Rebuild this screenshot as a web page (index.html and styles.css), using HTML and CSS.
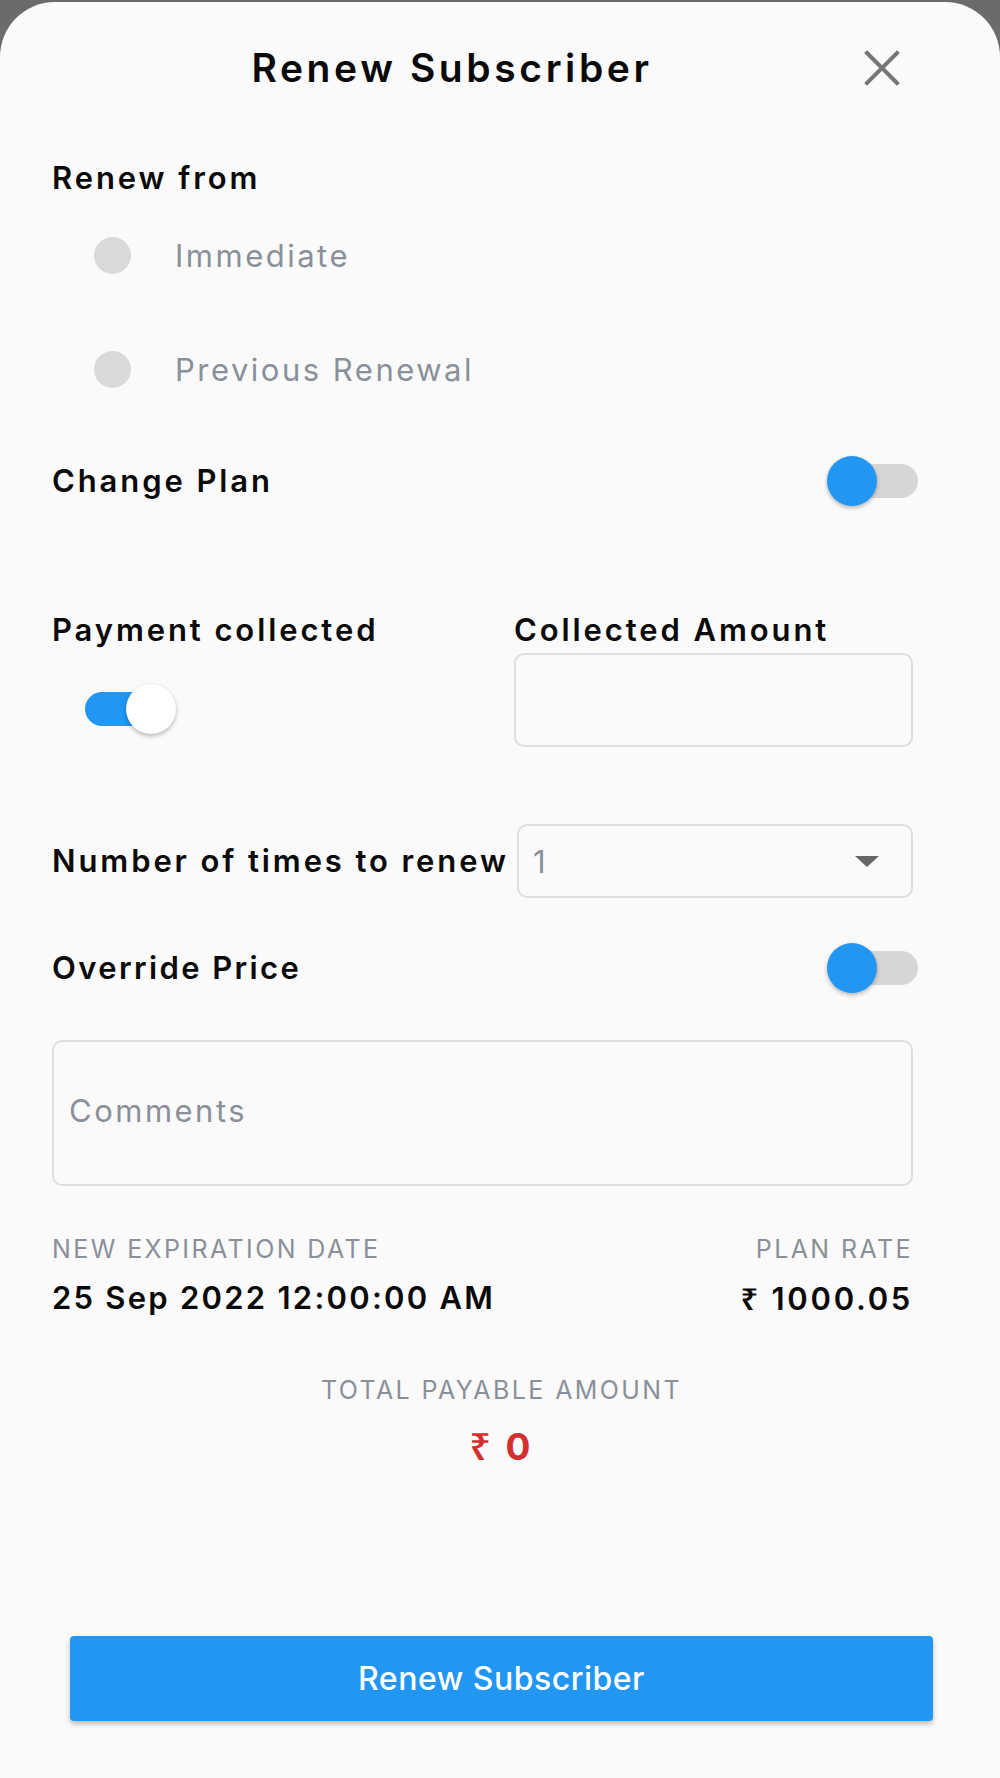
FILE: index.html
```html
<!DOCTYPE html>
<html lang="en">
<head>
  <meta charset="UTF-8" />
  <meta name="viewport" content="width=device-width, initial-scale=1" />
  <title>Renew Subscriber</title>
  <link rel="stylesheet" href="styles.css">
</head>
<body>

<div class="sheet">

  <!-- Header -->
  <div class="sheet-header">
    <h1 class="sheet-title">Renew Subscriber</h1>
    <button class="close-btn" title="Close">
      <svg viewBox="0 0 36 36" width="36" height="36">
        <path d="M3 3 L33 33 M33 3 L3 33" stroke="#767676" stroke-width="4" stroke-linecap="square" fill="none"/>
      </svg>
    </button>
  </div>

  <div class="sheet-body">

    <div class="label renew-from">Renew from</div>

    <div class="radio-row">
      <span class="radio"></span>
      <span class="radio-text">Immediate</span>
    </div>
    <div class="radio-row">
      <span class="radio"></span>
      <span class="radio-text">Previous Renewal</span>
    </div>

    <div class="switch-row change-plan">
      <span class="label">Change Plan</span>
      <span class="switch"><span class="track"></span><span class="knob"></span></span>
    </div>

    <div class="payment-row">
      <div class="payment-col">
        <div class="label">Payment collected</div>
        <span class="switch on"><span class="track"></span><span class="knob"></span></span>
      </div>
      <div class="amount-col">
        <div class="label">Collected Amount</div>
        <div class="field amount-field"></div>
      </div>
    </div>

    <div class="times-row">
      <span class="label">Number of times to renew</span>
      <div class="field select-field">
        <span class="select-value">1</span>
        <span class="caret"></span>
      </div>
    </div>

    <div class="switch-row override">
      <span class="label tight">Override Price</span>
      <span class="switch"><span class="track"></span><span class="knob"></span></span>
    </div>

    <div class="field comments-field">
      <span class="placeholder">Comments</span>
    </div>

    <div class="info-row">
      <div class="info-col">
        <div class="caption">NEW EXPIRATION DATE</div>
        <div class="value">25 Sep 2022 12:00:00 AM</div>
      </div>
      <div class="info-col right">
        <div class="caption">PLAN RATE</div>
        <div class="value price"><span class="rupee">₹</span> 1000.05</div>
      </div>
    </div>

    <div class="total">
      <div class="caption">TOTAL PAYABLE AMOUNT</div>
      <div class="total-value"><span class="rupee">₹</span> 0</div>
    </div>

    <button class="renew-btn">Renew Subscriber</button>

  </div>
</div>

</body>
</html>
```

FILE: styles.css
```css
body {
  margin: 0;
  background: #6b6b6b;
  font-family: "Inter", "Noto Sans", "DejaVu Sans", sans-serif;
  color: #0a0a0a;
}

.sheet {
  margin-top: 2px;
  min-height: 1776px;
  background: #fafafa;
  border-radius: 55px 55px 0 0;
  box-sizing: border-box;
}

/* header with title and close icon */
.sheet-header {
  display: flex;
  align-items: center;
  height: 132px;
  padding-right: 100px;
}

.sheet-title {
  flex: 1;
  margin: 0;
  padding-left: 40px;
  text-align: center;
  font-size: 39px;
  font-weight: 600;
  line-height: 50px;
  letter-spacing: 3.6px;
}

.close-btn {
  width: 36px;
  height: 36px;
  padding: 0;
  border: none;
  background: none;
  display: flex;
}

.sheet-body {
  padding: 0 87px 0 52px;
}

.label {
  font-size: 31px;
  font-weight: 600;
  line-height: 40px;
  letter-spacing: 2.9px;
  white-space: nowrap;
}

.label.tight {
  letter-spacing: 2.4px;
}

.renew-from {
  margin-top: 24px;
}

/* radio options */
.radio-row {
  height: 114px;
  display: flex;
  align-items: center;
  padding-left: 42px;
}

.radio {
  width: 37px;
  height: 37px;
  border-radius: 50%;
  background: #d9d9d9;
  margin-right: 44px;
}

.radio-text,
.select-value,
.placeholder {
  font-size: 31px;
  color: #8a9099;
  letter-spacing: 2.5px;
}

/* switches */
.switch-row {
  display: flex;
  align-items: center;
  justify-content: space-between;
}

.change-plan {
  height: 110px;
}

.override {
  margin-top: 40px;
  height: 60px;
}

.switch {
  position: relative;
  width: 85px;
  height: 34px;
  margin-right: -5px;
  display: block;
}

.switch .track {
  display: block;
  height: 34px;
  border-radius: 17px;
  background: #d6d6d6;
}

.switch .knob {
  position: absolute;
  top: -8px;
  left: -6px;
  width: 50px;
  height: 50px;
  border-radius: 50%;
  background: #2196f3;
  box-shadow: 0 2px 4px rgba(0, 0, 0, 0.28);
}

.switch.on {
  margin: 42px 0 0 33px;
}

.switch.on .track {
  background: #2196f3;
}

.switch.on .knob {
  left: auto;
  right: -6px;
  background: #fff;
}

/* payment + amount */
.payment-row {
  display: grid;
  grid-template-columns: 462px 399px;
  margin-top: 74px;
}

.field {
  border: 2px solid #dedede;
  border-radius: 10px;
  box-sizing: border-box;
}

.amount-field {
  margin-top: 3px;
  height: 94px;
}

.times-row {
  display: grid;
  grid-template-columns: 1fr 396px;
  align-items: center;
  margin-top: 77px;
}

.select-field {
  height: 74px;
  display: flex;
  align-items: center;
  justify-content: space-between;
  padding: 0 32px 0 14px;
}

.caret {
  width: 0;
  height: 0;
  border-left: 12px solid transparent;
  border-right: 12px solid transparent;
  border-top: 11px solid #666;
}

.comments-field {
  margin-top: 42px;
  height: 146px;
  display: flex;
  align-items: center;
  padding: 0 0 6px 15px;
}

/* summary */
.info-row {
  display: flex;
  justify-content: space-between;
  margin-top: 46px;
}

.info-col.right {
  text-align: right;
}

.caption {
  font-size: 25px;
  line-height: 34px;
  color: #8a9099;
  letter-spacing: 2.4px;
}

.value {
  margin-top: 12px;
  font-size: 31px;
  font-weight: 600;
  line-height: 40px;
  letter-spacing: 2.25px;
}

.value.price {
  letter-spacing: 2.7px;
}

.rupee {
  font-family: "Noto Sans", "DejaVu Sans", sans-serif;
  font-weight: 600;
}

.total {
  margin-top: 54px;
  text-align: center;
  margin-right: -38px;
}

.total-value {
  margin-top: 17px;
  font-size: 37px;
  font-weight: 700;
  line-height: 44px;
  letter-spacing: 3px;
  color: #d32f2f;
}

.renew-btn {
  display: block;
  width: 863px;
  height: 85px;
  margin: 167px 0 0 18px;
  border: none;
  border-radius: 4px;
  background: #2196f3;
  color: #fff;
  font-family: inherit;
  font-size: 32px;
  font-weight: 500;
  letter-spacing: 0.5px;
  box-shadow: 0 3px 5px rgba(0, 0, 0, 0.25);
}
```
